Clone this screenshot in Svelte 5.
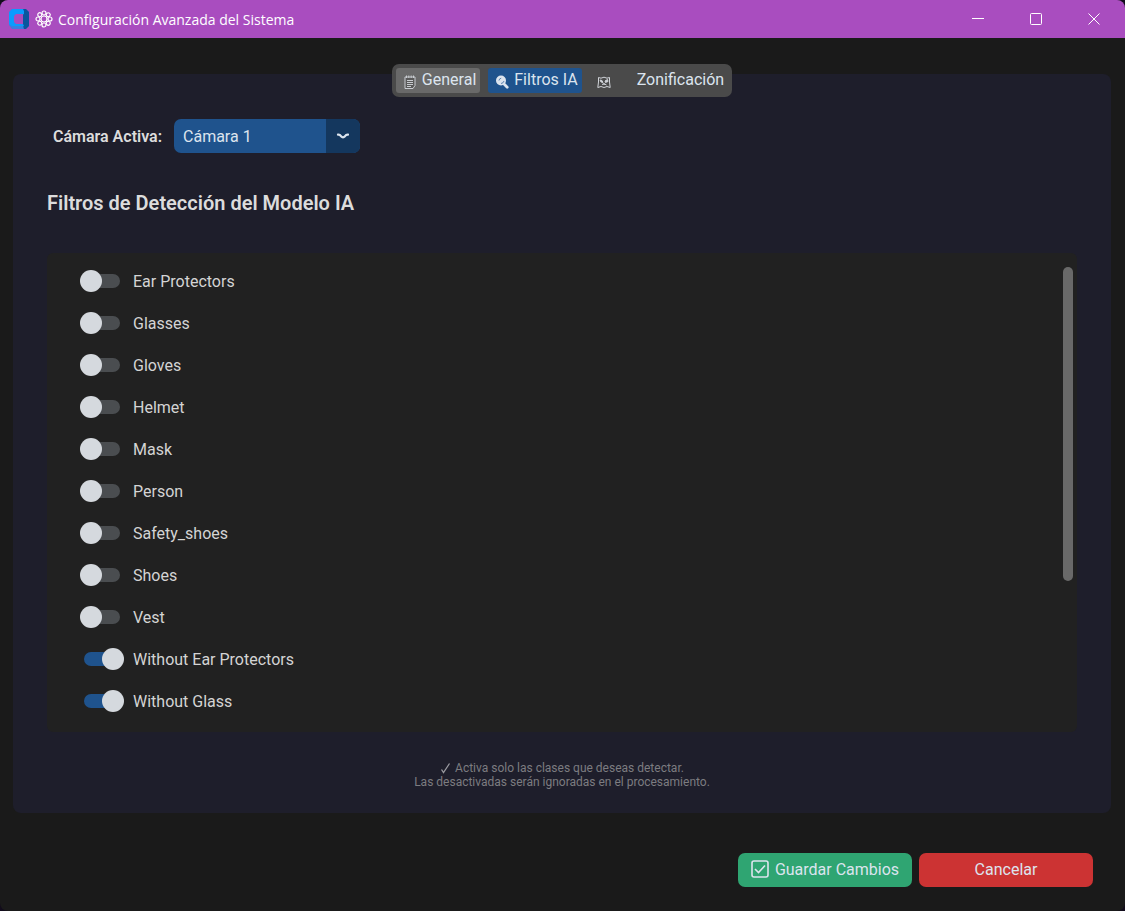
<script>
    let camaras = ["Cámara 1", "Cámara 2", "Cámara 3"];
    let camara = $state("Cámara 1");
    let tab = $state("filtros");

    let filtros = $state([
        { nombre: "Ear Protectors", activo: false },
        { nombre: "Glasses", activo: false },
        { nombre: "Gloves", activo: false },
        { nombre: "Helmet", activo: false },
        { nombre: "Mask", activo: false },
        { nombre: "Person", activo: false },
        { nombre: "Safety_shoes", activo: false },
        { nombre: "Shoes", activo: false },
        { nombre: "Vest", activo: false },
        { nombre: "Without Ear Protectors", activo: true },
        { nombre: "Without Glass", activo: true }
    ]);

    const petalos = [0, 45, 90, 135, 180, 225, 270, 315];
</script>

<div class="window">
    <header class="titlebar">
        <svg class="logo" viewBox="0 0 22 22" aria-hidden="true">
            <path d="M4 1H17L21 4V18L17 21H4L1 17V5Z" fill="#3a7fe0" />
            <path d="M15 1H18L21 4V18L18 21H15Z" fill="#0b559e" />
            <path d="M4 1H15L16 3V6L14 7H8L6 9V14L8 16H14L16 17L15 19H4L1 16V4Z" fill="#0a9bff" />
            <path d="M8 6H15V16H8L6 14V8Z" fill="#a94dbf" />
            <path d="M2 17L5 21H16L15 18H4Z" fill="#3a7fe0" />
        </svg>
        <svg class="flower" viewBox="0 0 18 18" aria-hidden="true">
            {#each petalos as a}
                <circle cx="9" cy="3" r="2" transform="rotate({a} 9 9)" />
            {/each}
            <circle cx="9" cy="9" r="3" />
        </svg>
        <h1>Configuración Avanzada del Sistema</h1>
        <div class="controls">
            <button aria-label="Minimizar">
                <svg viewBox="0 0 12 12"><path d="M0 5.5H12" /></svg>
            </button>
            <button aria-label="Maximizar">
                <svg viewBox="0 0 12 12"><rect x="0.5" y="0.5" width="11" height="11" rx="1" /></svg>
            </button>
            <button aria-label="Cerrar">
                <svg viewBox="0 0 12 12"><path d="M0.5 0.5L11.5 11.5M11.5 0.5L0.5 11.5" /></svg>
            </button>
        </div>
    </header>

    <main>
        <div class="tabs" role="tablist">
            <button role="tab" class="hover" aria-selected={tab === "general"} onclick={() => (tab = "general")}>
                <svg viewBox="0 0 14 14" aria-hidden="true">
                    <path d="M2 2H12V10.5L10 13.5H2Z" fill="#5a5a5a" stroke="#c9ccd1" />
                    <path d="M3.5 0.5V3M5.8 0.5V3M8.2 0.5V3M10.5 0.5V3M4 5.5H10M4 7.5H10M4 9.5H10M4 11.5H8" stroke="#c9ccd1" fill="none" />
                </svg>
                General
            </button>
            <button role="tab" aria-selected={tab === "filtros"} onclick={() => (tab = "filtros")}>
                <svg viewBox="0 0 14 14" aria-hidden="true">
                    <circle cx="6" cy="5.5" r="5" fill="#dce4ee" />
                    <path d="M4 5.5Q4.2 3.5 6.2 3.2M6 8.5Q8.5 8.2 9 6" stroke="#5f86b3" fill="none" />
                    <path d="M9.3 9.3L12.2 12.2" stroke="#dce4ee" stroke-width="2.8" stroke-linecap="round" />
                </svg>
                Filtros IA
            </button>
            <button role="tab" class="wide" aria-selected={tab === "zonas"} onclick={() => (tab = "zonas")}>
                <svg viewBox="0 0 14 14" aria-hidden="true">
                    <path d="M1.5 2.5L4 3.2L7 2.2L10 3.2L12.5 2.5V7L13.2 12.5L10 11.5L7 12.5L4 11.5L0.8 12.5L1.5 7Z" fill="none" stroke="#d0d3d8" />
                    <path d="M3 5L5 5.5L6 7.5L4 7ZM8 6L10.5 4.5L11 6.5L8.5 7.5ZM5 9.5L7 8.5L9.5 10" fill="#d0d3d8" stroke="#d0d3d8" />
                </svg>
                Zonificación
            </button>
        </div>

        <section class="panel">
            <div class="camera">
                <label for="camara">Cámara Activa:</label>
                <div class="select">
                    <select id="camara" bind:value={camara}>
                        {#each camaras as c}
                            <option>{c}</option>
                        {/each}
                    </select>
                    <span class="arrow">
                        <svg viewBox="0 0 14 8" aria-hidden="true"><path d="M2 2.6Q4 2.4 5 4.2Q7 6.4 9 4.2Q10 2.4 12 2.6" /></svg>
                    </span>
                </div>
            </div>

            <h2>Filtros de Detección del Modelo IA</h2>

            <div class="list">
                <div class="rows">
                    {#each filtros as f}
                        <label class="row">
                            <input type="checkbox" role="switch" bind:checked={f.activo} />
                            {f.nombre}
                        </label>
                    {/each}
                </div>
                <div class="scrollbar"><div class="thumb"></div></div>
            </div>

            <p class="hint">
                <svg viewBox="0 0 12 12" aria-hidden="true"><path d="M1.5 7.5L3.5 10.5L9.5 1.5" /></svg>
                Activa solo las clases que deseas detectar.<br />
                Las desactivadas serán ignoradas en el procesamiento.
            </p>
        </section>
    </main>

    <footer>
        <button class="save">
            <svg viewBox="0 0 18 18" aria-hidden="true">
                <rect x="1" y="1" width="16" height="16" rx="2" />
                <path d="M4 9L7.5 12.5L14 5.5" />
            </svg>
            Guardar Cambios
        </button>
        <button class="cancel">Cancelar</button>
    </footer>
</div>

<style>
:global(body){
    background:#120c1c;
}

.window{
    min-height:100vh;
    display:flex;
    flex-direction:column;
    background:#1a1a1a;
    border-radius:8px;
    overflow:hidden;
    font-family:Roboto, "Liberation Sans", sans-serif;
    font-size:16px;
    color:#dce4ee;
}

button, select{
    font:inherit;
    color:inherit;
    border:none;
    padding:0;
}

.titlebar{
    display:flex;
    align-items:center;
    height:38px;
    padding:0 2px 0 8px;
    background:#a94dbf;
    color:#fff;
}

.logo{
    width:22px;
    height:22px;
}

.flower{
    width:18px;
    height:18px;
    margin:0 5px;
    fill:none;
    stroke:#fff;
    stroke-width:1.2;
}

h1{
    flex:1;
    margin:0;
    font:400 14px "Open Sans", "Noto Sans", sans-serif;
}

.controls{
    display:flex;
    height:100%;
}

.controls button{
    width:58px;
    background:none;
}

.controls svg{
    width:12px;
    height:12px;
    fill:none;
    stroke:#fff;
}

main{
    flex:1;
    display:flex;
    flex-direction:column;
    padding:26px 14px 0 13px;
}

.tabs{
    z-index:1;
    align-self:center;
    display:flex;
    gap:8px;
    padding:4px;
    border-radius:7px;
    background:#4a4a4a;
}

.tabs button{
    display:flex;
    align-items:center;
    gap:5px;
    height:25px;
    padding:0 4px 2px 7px;
    border-radius:3px;
    background:none;
}

.tabs button.hover{
    background:#696969;
}

.tabs button[aria-selected="true"]{
    background:#1f538d;
}

.tabs .wide{
    gap:26px;
}

.tabs svg{
    width:14px;
    height:14px;
    margin-top:4px;
}

.panel{
    flex:1;
    display:flex;
    flex-direction:column;
    margin-top:-23px;
    padding:45px 34px 24px;
    border-radius:8px;
    background:#1e1e2b;
}

.camera{
    display:flex;
    align-items:center;
    gap:12px;
    padding-left:6px;
}

.camera label{
    font-size:16px;
    font-weight:600;
    color:#dcdcdc;
}

.select{
    display:flex;
    width:186px;
    height:34px;
    position:relative;
    border-radius:7px;
    overflow:hidden;
    background:#1f538d;
}

select{
    flex:1;
    appearance:none;
    padding-left:9px;
    background:none;
}

.arrow{
    position:absolute;
    right:0;
    width:34px;
    height:34px;
    display:grid;
    place-items:center;
    background:#14375e;
    pointer-events:none;
}

.arrow svg{
    width:14px;
    height:8px;
    fill:none;
    stroke:#dce4ee;
    stroke-width:2.2;
    stroke-linecap:round;
}

h2{
    margin:38px 0;
    font-size:20px;
    line-height:24px;
    font-weight:600;
    color:#dcdcdc;
}

.list{
    flex:1;
    display:flex;
    justify-content:space-between;
    border-radius:6px;
    background:#212121;
}

.rows{
    display:flex;
    flex-direction:column;
    gap:18px;
    padding:16px 0 19px 33px;
}

.row{
    display:flex;
    align-items:center;
    gap:9px;
    height:24px;
    color:#d4d4d4;
}

.row input{
    appearance:none;
    position:relative;
    width:44px;
    height:22px;
    margin:0;
}

.row input::before{
    content:"";
    position:absolute;
    inset:4px;
    border-radius:7px;
    background:#4a4d50;
}

.row input::after{
    content:"";
    position:absolute;
    left:0;
    width:22px;
    height:22px;
    border-radius:50%;
    background:#d5d9de;
}

.row input:checked::before{
    background:#1f538d;
}

.row input:checked::after{
    left:22px;
}

.scrollbar{
    width:10px;
    margin:14px 4px 16px 0;
}

.thumb{
    height:70%;
    border-radius:5px;
    background:#696969;
}

.hint{
    margin:29px 0 0;
    text-align:center;
    font-size:12px;
    line-height:14px;
    color:#7c7c80;
}

.hint svg{
    width:12px;
    height:12px;
    vertical-align:-2px;
    fill:none;
    stroke:#9a9aa0;
    stroke-width:1.3;
}

footer{
    display:flex;
    justify-content:flex-end;
    gap:7px;
    padding:40px 32px 24px;
}

footer button{
    display:flex;
    align-items:center;
    justify-content:center;
    gap:6px;
    width:174px;
    height:34px;
    padding-bottom:2px;
    border-radius:7px;
}

.save{
    background:#2fa572;
}

.cancel{
    background:#cc3333;
}

footer svg{
    width:18px;
    height:18px;
    fill:none;
    stroke:#dce4ee;
    stroke-width:1.6;
}
</style>
